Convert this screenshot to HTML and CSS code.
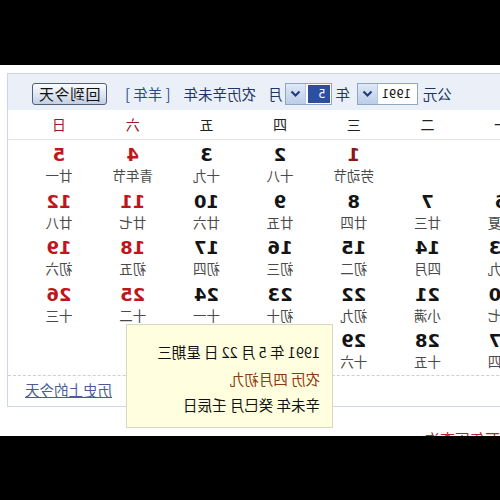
FILE: index.html
```html
<!DOCTYPE html>
<html lang="zh-CN">
<head>
<meta charset="utf-8">
<link rel="stylesheet" href="styles.css">
</head>
<body>
<div class="stage">
  <div class="topband"></div>
  <div class="calendar">
    <div class="cal-head">
      <span class="lbl">公元</span>
      <span class="sel sel-year"><span class="sel-val">1991</span><span class="sel-btn"><svg width="11" height="8" viewBox="0 0 11 8"><path d="M1.5 1.5 L5.5 5.5 L9.5 1.5" fill="none" stroke="#1d3a78" stroke-width="2"/></svg></span></span>
      <span class="lbl gap-year">年</span>
      <span class="sel sel-month"><span class="sel-val picked">5</span><span class="sel-btn"><svg width="11" height="8" viewBox="0 0 11 8"><path d="M1.5 1.5 L5.5 5.5 L9.5 1.5" fill="none" stroke="#1d3a78" stroke-width="2"/></svg></span></span>
      <span class="lbl gap-month">月</span>
      <span class="lbl gap-lunar">农历辛未年</span>
      <span class="lbl gap-zodiac">[ 羊年 ]</span>
      <button class="today-btn">回到今天</button>
    </div>
    <div class="weekdays">
      <div>一</div><div>二</div><div>三</div><div>四</div><div>五</div><div class="wk-end">六</div><div class="wk-end">日</div>
    </div>
    <div class="days">
      <div class="day"></div>
      <div class="day"></div>
      <div class="day holiday"><b>1</b><span>劳动节</span></div>
      <div class="day"><b>2</b><span>十八</span></div>
      <div class="day"><b>3</b><span>十九</span></div>
      <div class="day wkend"><b>4</b><span>青年节</span></div>
      <div class="day wkend"><b>5</b><span>廿一</span></div>

      <div class="day"><b>6</b><span>立夏</span></div>
      <div class="day"><b>7</b><span>廿三</span></div>
      <div class="day"><b>8</b><span>廿四</span></div>
      <div class="day"><b>9</b><span>廿五</span></div>
      <div class="day"><b>10</b><span>廿六</span></div>
      <div class="day wkend"><b>11</b><span>廿七</span></div>
      <div class="day wkend"><b>12</b><span>廿八</span></div>

      <div class="day"><b>13</b><span>廿九</span></div>
      <div class="day"><b>14</b><span>四月</span></div>
      <div class="day"><b>15</b><span>初二</span></div>
      <div class="day"><b>16</b><span>初三</span></div>
      <div class="day"><b>17</b><span>初四</span></div>
      <div class="day wkend"><b>18</b><span>初五</span></div>
      <div class="day wkend"><b>19</b><span>初六</span></div>

      <div class="day"><b>20</b><span>初七</span></div>
      <div class="day"><b>21</b><span>小满</span></div>
      <div class="day"><b>22</b><span>初九</span></div>
      <div class="day"><b>23</b><span>初十</span></div>
      <div class="day"><b>24</b><span>十一</span></div>
      <div class="day wkend"><b>25</b><span>十二</span></div>
      <div class="day wkend"><b>26</b><span>十三</span></div>

      <div class="day"><b>27</b><span>十四</span></div>
      <div class="day"><b>28</b><span>十五</span></div>
      <div class="day"><b>29</b><span>十六</span></div>
      <div class="day"><b>30</b><span>十七</span></div>
      <div class="day"><b>31</b><span>十八</span></div>
      <div class="day"></div>
      <div class="day"></div>
    </div>
    <div class="cal-foot"><a class="history" href="#">历史上的今天</a></div>
  </div>
  <div class="more">万年历查询</div>
  <div class="tooltip">
    <div>1991 年 5 月 22 日 星期三</div>
    <div class="tip-lunar">农历 四月初九</div>
    <div>辛未年 癸巳月 壬辰日</div>
  </div>
  <div class="bottomband"></div>
</div>
</body>
</html>
```

FILE: styles.css
```css
html, body {
  margin: 0;
  padding: 0;
  background: #000;
}
.stage {
  position: relative;
  width: 500px;
  height: 500px;
  overflow: hidden;
  background: #fff;
  transform: scaleX(-1);
  font-family: "Noto Sans CJK SC", "DejaVu Sans", sans-serif;
  color: #222;
}
.topband {
  height: 65px;
  background: #000;
}
.bottomband {
  position: absolute;
  left: 0;
  top: 436px;
  width: 500px;
  height: 64px;
  background: #000;
}
.calendar {
  margin-top: 8px;
  margin-left: -40px;
  width: 533px;
  box-sizing: border-box;
  border: 1px solid #cbd6e6;
}
.cal-head {
  height: 36px;
  box-sizing: border-box;
  padding: 3px 24px 0 87px;
  background: #ebf0f8;
  display: flex;
  align-items: center;
  font-size: 14.5px;
  color: #1f3566;
  white-space: nowrap;
}
.lbl {
  line-height: 20px;
}
.gap-year { margin-left: 7px; }
.gap-month { margin-left: 3px; }
.gap-lunar { margin-left: 12px; }
.gap-zodiac { margin-left: 13px; color: #27498a; }
.sel {
  display: flex;
  height: 22px;
  box-sizing: border-box;
  border: 1px solid #8fa6c6;
  background: #fff;
  align-items: stretch;
}
.sel-year {
  margin-left: 5px;
  width: 61px;
}
.sel-month {
  margin-left: 3px;
  width: 47px;
}
.sel-val {
  flex: 1;
  font-family: "DejaVu Sans", sans-serif;
  font-size: 11.5px;
  line-height: 20px;
  padding-left: 6px;
  color: #111;
}
.sel-val.picked {
  background: #2c4f9e;
  color: #fff;
  margin: 1px 2px 1px 1px;
  line-height: 18px;
  padding-left: 5px;
}
.sel-btn {
  width: 19px;
  border-left: 1px solid #b9c8e0;
  background: linear-gradient(#dfe8f7, #bccde9);
  display: flex;
  align-items: center;
  justify-content: center;
}
.today-btn {
  margin-left: auto;
  width: 75px;
  height: 22px;
  padding: 0;
  border: 1px solid #4e5f7e;
  border-radius: 3px;
  background: linear-gradient(#fbfcfe, #dde5f1 55%, #c3cfe2);
  font-family: "Noto Sans CJK SC", sans-serif;
  font-size: 15px;
  line-height: 20px;
  color: #111;
  letter-spacing: 0.5px;
}
.weekdays {
  display: grid;
  grid-template-columns: repeat(7, 73.7px);
  padding-left: 1px;
  height: 30px;
  box-sizing: border-box;
  border-bottom: 1px solid #e2e2e2;
  font-size: 14px;
  line-height: 29px;
  text-align: center;
  color: #222;
}
.weekdays .wk-end {
  color: #a3161c;
}
.days {
  display: grid;
  grid-template-columns: repeat(7, 73.7px);
  grid-auto-rows: 46.5px;
  padding-left: 1px;
  margin-bottom: 2px;
}
.day {
  display: flex;
  flex-direction: column;
  align-items: center;
  padding-top: 4px;
  box-sizing: border-box;
}
.day b {
  font-family: "DejaVu Sans", sans-serif;
  font-weight: bold;
  font-size: 18px;
  line-height: 21px;
  color: #141414;
}
.day span {
  font-size: 13.5px;
  line-height: 20px;
  color: #4a4a4a;
}
.day.wkend b {
  color: #c0151d;
}
.day.holiday b {
  color: #8c1616;
}
.cal-foot {
  border-top: 1px dashed #cfcfcf;
  height: 31px;
  box-sizing: border-box;
  display: flex;
  justify-content: flex-end;
  padding: 3px 17px 0 0;
}
.history {
  font-size: 14.5px;
  line-height: 22px;
  color: #4a5c93;
  text-decoration: underline;
}
.more {
  margin-top: 23px;
  font-size: 15px;
  line-height: 18px;
  color: #b3262a;
}
.tooltip {
  position: absolute;
  left: 167px;
  top: 324px;
  width: 207px;
  height: 104px;
  box-sizing: border-box;
  padding: 14px 0 0 12px;
  background: #ffffdf;
  border: 1px solid #d7d7c4;
  font-size: 14.5px;
  line-height: 26.5px;
  color: #111;
  white-space: nowrap;
}
.tip-lunar {
  color: #8b3a10;
}
```
